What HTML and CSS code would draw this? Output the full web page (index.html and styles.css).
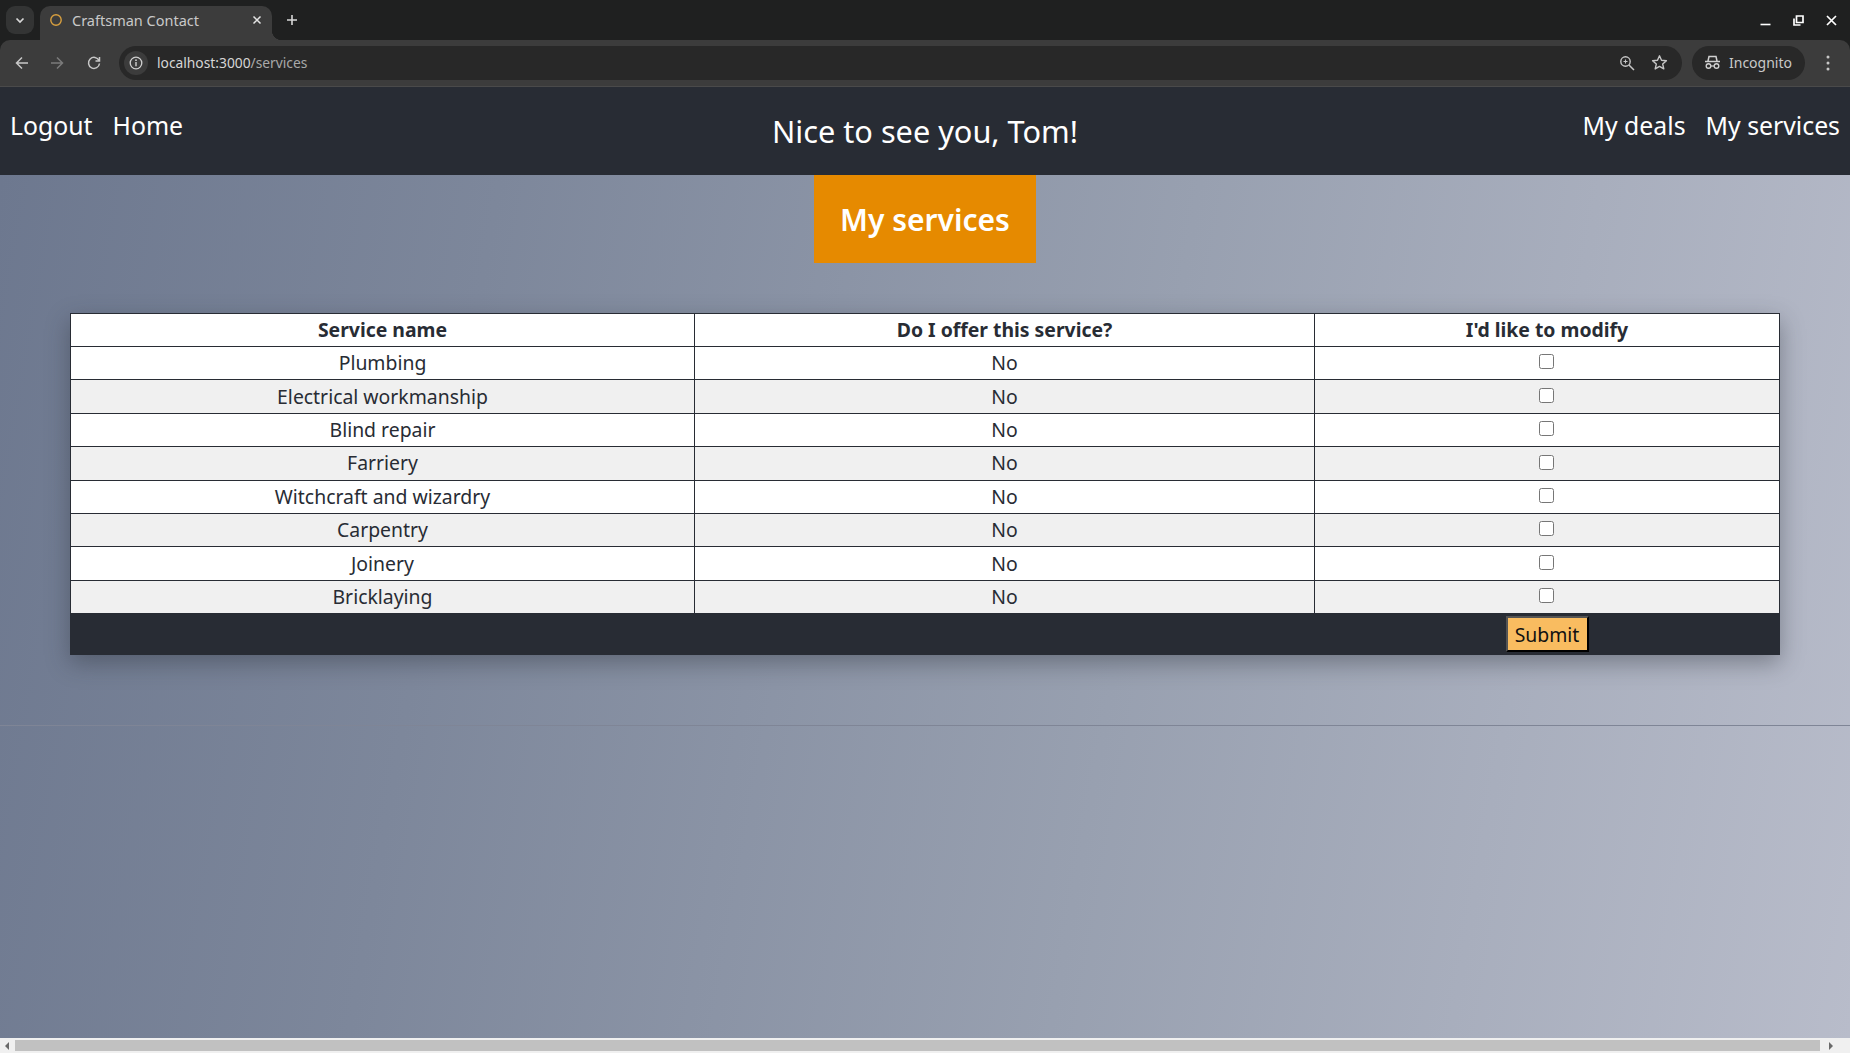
FILE: index.html
```html
<!DOCTYPE html>
<html lang="en">
<head>
  <meta charset="UTF-8" />
  <title>Craftsman Contact</title>
  <link rel="stylesheet" href="styles.css">
</head>
<body>

  <div class="tabbar">
    <div class="tab-search">
      <svg width="12" height="12" viewBox="0 0 12 12"><path d="M2.5 4.5 6 8l3.5-3.5" fill="none" stroke="#d8d8d8" stroke-width="1.7"/></svg>
    </div>
    <div class="tab">
      <svg class="tab-favicon" width="14" height="14" viewBox="0 0 14 14"><circle cx="7" cy="7" r="5.2" fill="none" stroke="#d9a03f" stroke-width="1.4"/></svg>
      <span class="tab-title">Craftsman Contact</span>
      <svg class="tab-close" width="10" height="10" viewBox="0 0 10 10"><path d="M1.5 1.5l7 7M8.5 1.5l-7 7" stroke="#e4e4e4" stroke-width="1.5"/></svg>
    </div>
    <svg class="new-tab" width="12" height="12" viewBox="0 0 12 12"><path d="M6 1v10M1 6h10" stroke="#d8d8d8" stroke-width="1.6"/></svg>
    <div class="window-controls">
      <svg width="11" height="11" viewBox="0 0 11 11"><path d="M.5 9.5h10" stroke="#fff" stroke-width="1.6"/></svg>
      <svg width="11" height="11" viewBox="0 0 11 11"><path d="M1 3.5v6.500h6.500M3.500 1h6.500v6.500h-6.500z" fill="none" stroke="#fff" stroke-width="1.700"/></svg>
      <svg width="11" height="11" viewBox="0 0 11 11"><path d="M1 1l9 9M10 1l-9 9" stroke="#fff" stroke-width="1.700"/></svg>
    </div>
  </div>

  <div class="toolbar">
    <svg class="nav-icon" width="14" height="14" viewBox="0 0 14 14"><path d="M13 7H2M7 1.500 1.500 7 7 12.500" fill="none" stroke="#c7c7c7" stroke-width="1.500"/></svg>
    <svg class="nav-icon" width="14" height="14" viewBox="0 0 14 14"><path d="M1 7h11M7 1.500 12.500 7 7 12.500" fill="none" stroke="#7b7b7b" stroke-width="1.500"/></svg>
    <svg class="nav-icon" width="14" height="14" viewBox="0 0 14 14"><path d="M12 4.500A5.500 5.500 0 1 0 12.500 7.500M12.500 1v4h-4" fill="none" stroke="#c7c7c7" stroke-width="1.500"/></svg>
    <div class="omnibox">
      <span class="site-info">
        <svg width="14" height="14" viewBox="0 0 14 14"><circle cx="7" cy="7" r="5.800" fill="none" stroke="#d0d0d0" stroke-width="1.300"/><path d="M7 6v4.200" stroke="#d0d0d0" stroke-width="1.400"/><circle cx="7" cy="4.200" r=".9" fill="#d0d0d0"/></svg>
      </span>
      <span class="url">localhost:3000<span class="url-path">/services</span></span>
      <svg class="omni-icon" width="16" height="16" viewBox="0 0 16 16"><circle cx="6.500" cy="6.500" r="4.700" fill="none" stroke="#c7c7c7" stroke-width="1.400"/><path d="M10 10l5 5" stroke="#c7c7c7" stroke-width="1.500"/><path d="M4.500 6.500h4M6.500 4.500v4" stroke="#c7c7c7" stroke-width="1.100"/></svg>
      <svg class="omni-icon" width="17" height="17" viewBox="0 0 17 17"><path d="M8.500 1.800l2 4.500 4.900.5-3.700 3.300 1.100 4.800-4.300-2.500-4.300 2.500 1.100-4.800L1.600 6.800l4.900-.5z" fill="none" stroke="#c7c7c7" stroke-width="1.400" stroke-linejoin="round"/></svg>
    </div>
    <div class="incognito-chip">
      <svg width="17" height="15" viewBox="0 0 17 15"><path d="M4 6l1-4.500h7L13 6M1 6.500h15" fill="none" stroke="#d0d0d0" stroke-width="1.500"/><circle cx="4.500" cy="11" r="2.300" fill="none" stroke="#d0d0d0" stroke-width="1.400"/><circle cx="12.500" cy="11" r="2.300" fill="none" stroke="#d0d0d0" stroke-width="1.400"/><path d="M6.800 11h3.400" stroke="#d0d0d0" stroke-width="1.200"/></svg>
      <span>Incognito</span>
    </div>
    <svg class="kebab" width="4" height="16" viewBox="0 0 4 16"><circle cx="2" cy="2" r="1.500" fill="#c7c7c7"/><circle cx="2" cy="8" r="1.500" fill="#c7c7c7"/><circle cx="2" cy="14" r="1.500" fill="#c7c7c7"/></svg>
  </div>

  <div class="viewport">
    <header class="navbar">
      <nav class="nav-links">
        <a>Logout</a>
        <a>Home</a>
      </nav>
      <p class="greeting">Nice to see you, Tom!</p>
      <nav class="nav-links nav-right">
        <a>My deals</a>
        <a>My services</a>
      </nav>
    </header>

    <main class="content">
      <h1 class="page-title">My services</h1>

      <table class="services">
        <colgroup>
          <col class="col-name">
          <col class="col-offer">
          <col class="col-modify">
        </colgroup>
        <thead>
          <tr>
            <th>Service name</th>
            <th>Do I offer this service?</th>
            <th>I'd like to modify</th>
          </tr>
        </thead>
        <tbody>
          <tr><td>Plumbing</td><td>No</td><td><input type="checkbox"></td></tr>
          <tr><td>Electrical workmanship</td><td>No</td><td><input type="checkbox"></td></tr>
          <tr><td>Blind repair</td><td>No</td><td><input type="checkbox"></td></tr>
          <tr><td>Farriery</td><td>No</td><td><input type="checkbox"></td></tr>
          <tr><td>Witchcraft and wizardry</td><td>No</td><td><input type="checkbox"></td></tr>
          <tr><td>Carpentry</td><td>No</td><td><input type="checkbox"></td></tr>
          <tr><td>Joinery</td><td>No</td><td><input type="checkbox"></td></tr>
          <tr><td>Bricklaying</td><td>No</td><td><input type="checkbox"></td></tr>
        </tbody>
        <tfoot>
          <tr>
            <td colspan="2"></td>
            <td><button type="button">Submit</button></td>
          </tr>
        </tfoot>
      </table>

      <hr class="divider">
    </main>

    <div class="scrollbar">
      <span class="arrow arrow-left"></span>
      <span class="thumb"></span>
      <span class="arrow arrow-right"></span>
    </div>
  </div>

</body>
</html>
```

FILE: styles.css
```css
* {
  box-sizing: border-box;
}

body {
  margin: 0;
  height: 100vh;
  display: flex;
  flex-direction: column;
  overflow: hidden;
  background: #1f2020;
  font-family: "Noto Sans", sans-serif;
}

/* browser chrome */

.tabbar {
  height: 40px;
  display: flex;
  align-items: flex-end;
  padding-left: 6px;
  background: #1f2020;
  flex-shrink: 0;
}

.tab-search {
  width: 28px;
  height: 28px;
  margin-bottom: 6px;
  border-radius: 9px;
  background: #333434;
  display: flex;
  align-items: center;
  justify-content: center;
}

.tab {
  position: relative;
  width: 232px;
  height: 34px;
  margin-left: 6px;
  padding: 0 10px 6px 8px;
  display: flex;
  align-items: center;
  background: #3c3c3c;
  border-radius: 10px 10px 0 0;
}

.tab::after {
  content: "";
  position: absolute;
  right: -10px;
  bottom: 0;
  width: 10px;
  height: 10px;
  background: radial-gradient(circle at 100% 0, transparent 10px, #3c3c3c 10.5px);
}

.tab-favicon {
  margin-left: 1px;
  flex-shrink: 0;
}

.tab-title {
  margin-left: 9px;
  margin-top: -1px;
  flex-grow: 1;
  font-size: 14.5px;
  color: #c9c9c9;
}

.new-tab {
  margin: 0 0 14px 14px;
}

.window-controls {
  margin-left: auto;
  margin-right: 13px;
  margin-bottom: 14px;
  display: flex;
  gap: 22px;
}

.toolbar {
  height: 47px;
  display: flex;
  align-items: center;
  padding-left: 15px;
  padding-bottom: 1px;
  background: #3c3c3c;
  border-bottom: 1px solid #4a4a4a;
  border-radius: 10px 10px 0 0;
  flex-shrink: 0;
}

.nav-icon {
  margin-right: 21px;
  flex-shrink: 0;
}

.nav-icon:nth-child(3) {
  margin-right: 0;
  margin-left: 2px;
}

.omnibox {
  width: 1563px;
  height: 34px;
  margin-left: 18px;
  padding: 0 14px 0 5px;
  display: flex;
  align-items: center;
  gap: 16px;
  background: #282828;
  border-radius: 17px;
}

.site-info {
  width: 24px;
  height: 24px;
  margin-right: -7px;
  border-radius: 50%;
  background: #3c3c3c;
  display: flex;
  align-items: center;
  justify-content: center;
}

.url {
  flex-grow: 1;
  font-size: 13.8px;
  color: #d6d6d6;
}

.url-path {
  color: #a9a9a9;
}

.incognito-chip {
  width: 113px;
  height: 34px;
  margin-left: 10px;
  padding-left: 12px;
  display: flex;
  align-items: center;
  gap: 8px;
  background: #282828;
  border-radius: 17px;
  font-size: 14px;
  color: #c9c9c9;
}

.kebab {
  margin-left: 21px;
}

/* page */

.viewport {
  flex-grow: 1;
  display: flex;
  flex-direction: column;
  min-height: 0;
}

.navbar {
  height: 88px;
  display: grid;
  grid-template-columns: 1fr auto 1fr;
  background: #282c34;
  color: #fff;
  flex-shrink: 0;
}

.nav-links {
  display: flex;
  gap: 20px;
  padding: 21px 10px 0;
  font-size: 24.8px;
  line-height: 34px;
}

.nav-right {
  justify-content: flex-end;
}

.greeting {
  margin: 0;
  padding-top: 23px;
  font-size: 30.7px;
  line-height: 42px;
}

.content {
  flex-grow: 1;
  min-height: 0;
  padding-bottom: 1px;
  background: linear-gradient(100deg, #6d788f 0%, #7d879b 25%, #98a0b0 60%, #b8bcca 100%);
}

.page-title {
  width: 222px;
  height: 88px;
  margin: 0 auto 50px;
  background: #e68a00;
  color: #fff;
  font-size: 30px;
  font-weight: 600;
  line-height: 89px;
  text-align: center;
}

.services {
  width: 1710px;
  margin: 0 auto 0 70px;
  table-layout: fixed;
  border-collapse: collapse;
  background: #fff;
  color: #282c34;
  font-size: 19.4px;
  text-align: center;
  box-shadow: 0 8px 22px rgba(40, 44, 52, 0.4);
}

.col-name {
  width: 624px;
}

.col-offer {
  width: 620px;
}

.services th,
.services td {
  height: 33.4px;
  padding: 0;
  border: 1px solid #282c34;
  line-height: 26px;
}

.services th {
  height: 33px;
  font-weight: 700;
}

.services tbody tr:nth-child(even) {
  background: #f0f0f0;
}

.services input[type="checkbox"] {
  width: 15px;
  height: 15px;
  margin: 0 2px 6px 0;
  vertical-align: middle;
}

.services tfoot td {
  height: 41px;
  background: #282c34;
}

.services button {
  display: block;
  width: 83px;
  height: 36px;
  margin: 0 auto;
  padding: 0;
  border: 2px outset #000;
  background: #f9bc60;
  color: #111;
  font-family: inherit;
  font-size: 19.4px;
}

.divider {
  margin: 70px 0 0;
  border: 0;
  border-top: 1px solid #7f8596;
}

/* page scrollbar */

.scrollbar {
  height: 15px;
  display: flex;
  align-items: center;
  background: #f0f0f0;
  flex-shrink: 0;
}

.thumb {
  width: 1805px;
  height: 11px;
  margin: 0 9px 0 6px;
  background: #c1c1c1;
}

.arrow {
  width: 0;
  height: 0;
  border-top: 4px solid transparent;
  border-bottom: 4px solid transparent;
}

.arrow-left {
  margin-left: 5px;
  border-right: 4px solid #6a6a6a;
}

.arrow-right {
  border-left: 4px solid #6a6a6a;
}
```
